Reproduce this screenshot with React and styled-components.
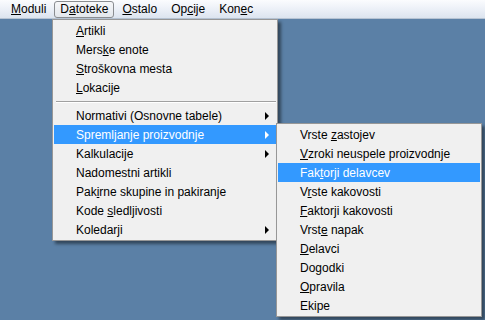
import React from 'react'
import styled, { createGlobalStyle } from 'styled-components'

const GlobalStyle = createGlobalStyle`
  html, body {
    margin: 0;
    padding: 0;
    background: #5b80a6;
  }
  body {
    font-family: "Liberation Sans", Arial, sans-serif;
    font-size: 12px;
    color: #000;
  }
`

const Screen = styled.div`
  position: relative;
  width: 485px;
  height: 320px;
  overflow: hidden;
  background: #5b80a6;
`

const MenuBar = styled.div`
  display: flex;
  align-items: center;
  height: 18px;
  padding-left: 4px;
  background: linear-gradient(#fbfcfe, #e9eef6 60%, #dce4ef);
  border-bottom: 1px solid #b6c3d3;
`

const BarItem = styled.div`
  box-sizing: border-box;
  height: 17px;
  line-height: 15px;
  margin: 0 1px;
  padding: 0 5px;
  border: 1px solid ${({ active }) => (active ? '#8a8d91' : 'transparent')};
  border-radius: 3px;
  background: ${({ active }) =>
    active ? 'linear-gradient(#f6f7f9, #e3e7ec)' : 'transparent'};
  white-space: nowrap;
`

const Key = styled.span`
  text-decoration: underline;
  text-underline-offset: 1px;
`

const Menu = styled.div`
  position: absolute;
  top: ${({ top }) => top}px;
  left: ${({ left }) => left}px;
  width: ${({ width }) => width}px;
  box-sizing: border-box;
  padding: 1px 1px;
  background: #f0f0f0;
  border: 1px solid #979797;
  box-shadow: 3px 3px 3px rgba(0, 0, 0, 0.45);
  z-index: ${({ level }) => level};
`

const Item = styled.div`
  position: relative;
  display: flex;
  align-items: center;
  height: 19px;
  padding-left: ${({ indent }) => indent}px;
  padding-right: 7px;
  background: ${({ selected }) => (selected ? '#3399ff' : 'transparent')};
  color: ${({ selected }) => (selected ? '#fff' : '#000')};
  white-space: nowrap;
`

const Label = styled.span`
  flex: 1;
`

const Arrow = styled.span`
  width: 0;
  height: 0;
  border-top: 4px solid transparent;
  border-bottom: 4px solid transparent;
  border-left: 4px solid ${({ selected }) => (selected ? '#fff' : '#000')};
`

const Separator = styled.div`
  height: 9px;
  display: flex;
  align-items: center;
  padding-left: 2px;
  &::after {
    content: '';
    flex: 1;
    height: 1px;
    background: #a0a0a0;
    box-shadow: 0 1px 0 #fff;
  }
`

const bar = [
  ['', 'M', 'oduli'],
  ['D', 'a', 'toteke', true],
  ['', 'O', 'stalo'],
  ['Op', 'c', 'ije'],
  ['Kon', 'e', 'c'],
]

// [before, key, after, hasSub, selected]
const files = [
  ['', 'A', 'rtikli'],
  ['Mers', 'k', 'e enote'],
  ['', 'S', 'troškovna mesta'],
  ['', 'L', 'okacije'],
  null,
  ['Normativi (Osnovne tabele)', '', '', true],
  ['Spremljanje proizvodnje', '', '', true, true],
  ['Kalkulacije', '', '', true],
  ['Nadomestni artikli', '', ''],
  ['Pak', 'i', 'rne skupine in pakiranje'],
  ['Kode ', 's', 'ledljivosti'],
  ['Koledarji', '', '', true],
]

const production = [
  ['Vrste ', 'z', 'astojev'],
  ['', 'V', 'zroki neuspele proizvodnje'],
  ['Fak', 't', 'orji delavcev', false, true],
  ['V', 'r', 'ste kakovosti'],
  ['', 'F', 'aktorji kakovosti'],
  ['Vrst', 'e', ' napak'],
  ['', 'D', 'elavci'],
  ['Do', 'g', 'odki'],
  ['', 'O', 'pravila'],
  ['Ekipe', '', ''],
]

function MenuEntry({ entry, indent }) {
  const [before, key, after, sub, selected] = entry
  return (
    <Item indent={indent} selected={selected}>
      <Label>
        {before}
        {key && <Key>{key}</Key>}
        {after}
      </Label>
      {sub && <Arrow selected={selected} />}
    </Item>
  )
}

export default function App() {
  return (
    <Screen>
      <GlobalStyle />
      <MenuBar>
        {bar.map(([b, k, a, active]) => (
          <BarItem key={b + k + a} active={active}>
            {b}
            <Key>{k}</Key>
            {a}
          </BarItem>
        ))}
      </MenuBar>

      <Menu top={19} left={52} width={226} level={1}>
        {files.map((entry, i) =>
          entry ? (
            <MenuEntry key={i} entry={entry} indent={22} />
          ) : (
            <Separator key={i} />
          )
        )}
      </Menu>

      <Menu top={123} left={276} width={206} level={2}>
        {production.map((entry, i) => (
          <MenuEntry key={i} entry={entry} indent={22} />
        ))}
      </Menu>
    </Screen>
  )
}
